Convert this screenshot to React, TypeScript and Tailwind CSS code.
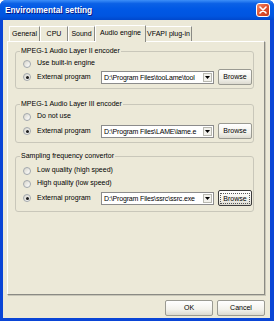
import React from "react";

const Radio = ({ checked }: { checked?: boolean }) => (
  <span className="w-[8px] h-[8px] rounded-full border border-[#a3a8ad] bg-[linear-gradient(135deg,#d6d4cb,#ffffff)] flex items-center justify-center shrink-0">
    {checked && <span className="w-[3px] h-[3px] rounded-full bg-[#1e1e1e]" />}
  </span>
);

const RadioRow = ({ label, checked }: { label: string; checked?: boolean }) => (
  <div className="flex items-center h-[13px] pl-[7px]">
    <Radio checked={checked} />
    <span className="ml-[6px]">{label}</span>
  </div>
);

const Btn = ({ label, w, focused }: { label: string; w: string; focused?: boolean }) => (
  <div
    className={`${w} h-[16px] rounded-[2px] border flex items-center justify-center shrink-0 bg-[linear-gradient(180deg,#ffffff,#f3f2ec_60%,#dcdad0)] ${
      focused ? "border-[#3c3c3c]" : "border-[#9a9a92]"
    }`}
  >
    {focused ? (
      <span className="px-[2px] leading-[9px] border border-dotted border-[#555]">{label}</span>
    ) : (
      <span>{label}</span>
    )}
  </div>
);

const Combo = ({ text }: { text: string }) => (
  <div className="w-[113px] h-[13px] border border-[#8c8c8c] bg-white flex items-center shrink-0">
    <span className="flex-1 min-w-0 pl-[2px] overflow-hidden whitespace-nowrap leading-[11px] tracking-[-0.15px]">
      {text}
    </span>
    <span className="w-[9px] h-[9px] mr-[1px] border border-[#b8b8b0] bg-[#f2f1ec] flex items-center justify-center shrink-0">
      <svg width="5" height="3" viewBox="0 0 5 3">
        <path d="M0 0H5L2.5 3Z" fill="#000" />
      </svg>
    </span>
  </div>
);

const ExtRow = ({ text, focused }: { text: string; focused?: boolean }) => (
  <div className="flex items-center h-[16px] pl-[7px]">
    <div className="w-[78px] flex items-center shrink-0">
      <Radio checked />
      <span className="ml-[6px]">External program</span>
    </div>
    <Combo text={text} />
    <div className="ml-[4px]">
      <Btn label="Browse" w="w-[34px]" focused={focused} />
    </div>
  </div>
);

const Group = ({
  title,
  className,
  children,
}: {
  title: string;
  className?: string;
  children: React.ReactNode;
}) => (
  <fieldset className={`border border-[#c9c7ba] rounded-[3px] ${className ?? ""}`}>
    <legend className="ml-[4px] px-[1px] leading-[8px] h-[8px]">{title}</legend>
    {children}
  </fieldset>
);

export default function App() {
  const tabs = ["General", "CPU", "Sound"];
  return (
    <div className="w-[274px] h-[321px] flex flex-col bg-[#0a45d6] rounded-t-[6px] overflow-hidden font-['Liberation_Sans',Arial,sans-serif] text-[7px] text-black">
      {/* Title bar */}
      <div className="h-[20px] shrink-0 flex items-center justify-between pl-[5px] pr-[4px] bg-[linear-gradient(180deg,#3d8ff8_0%,#0b61e6_18%,#0058e5_45%,#0055e0_80%,#0047cc_100%)]">
        <span className="text-white font-bold text-[8.3px] [text-shadow:1px_1px_0_#0a1883]">
          Environmental setting
        </span>
        <div className="w-[14px] h-[14px] rounded-[3px] border border-white bg-[linear-gradient(135deg,#f08a6a,#e0512f_50%,#c43a1a)] flex items-center justify-center">
          <svg width="8" height="8" viewBox="0 0 8 8">
            <path d="M1 1L7 7M7 1L1 7" stroke="#fff" strokeWidth="1.6" strokeLinecap="round" />
          </svg>
        </div>
      </div>

      {/* Body */}
      <div className="flex-1 ml-[3px] mr-[4px] mb-[3px] bg-[#ece9d8] flex flex-col pt-[4px] pl-[4px] pr-[5px]">
        {/* Tabs */}
        <div className="flex items-end h-[17px] pl-[2px] relative z-10">
          {tabs.map((t, i) => (
            <div
              key={t}
              className={`h-[15px] flex items-center justify-center border-t border-l border-r border-t-white border-l-white border-r-[#8a8a84] ${
                i === 0 ? "w-[31px]" : i === 1 ? "w-[28px]" : "w-[27px]"
              }`}
            >
              {t}
            </div>
          ))}
          <div className="h-[17px] w-[51px] -mb-px flex items-center justify-center bg-[#ece9d8] border-t border-l border-r border-t-white border-l-white border-r-[#8a8a84] pb-[1px]">
            Audio engine
          </div>
          <div className="h-[15px] w-[46px] flex items-center justify-center border-t border-r border-t-white border-r-[#8a8a84]">
            VFAPI plug-in
          </div>
        </div>

        {/* Panel */}
        <div className="h-[254px] shrink-0 border border-t-white border-l-white border-r-[#8a8a84] border-b-[#8a8a84] shadow-[1px_1px_0_#c8c6b8] pt-[5px] pl-[7px] pr-[10px] flex flex-col">
          <Group title="MPEG-1 Audio Layer II encoder">
            <div className="pt-[3px] pb-[3px]">
              <div className="flex items-center h-[11px] pl-[7px]">
                <Radio />
                <span className="ml-[6px]">Use built-in engine</span>
              </div>
              <ExtRow text="D:\Program Files\tooLame\tool" />
            </div>
          </Group>

          <Group title="MPEG-1 Audio Layer III encoder" className="mt-[11px]">
            <div className="pt-[2px] pb-[3px]">
              <RadioRow label="Do not use" />
              <ExtRow text="D:\Program Files\LAME\lame.e" />
            </div>
          </Group>

          <Group title="Sampling frequency convertor" className="mt-[9px]">
            <div className="pt-[4px] pb-[5px]">
              <RadioRow label="Low quality (high speed)" />
              <RadioRow label="High quality (low speed)" />
              <ExtRow text="D:\Program Files\ssrc\ssrc.exe" focused />
            </div>
          </Group>
        </div>

        {/* Buttons */}
        <div className="mt-[5px] flex justify-end gap-[4px]">
          <Btn label="OK" w="w-[48px]" />
          <Btn label="Cancel" w="w-[48px]" />
        </div>
      </div>
    </div>
  );
}
